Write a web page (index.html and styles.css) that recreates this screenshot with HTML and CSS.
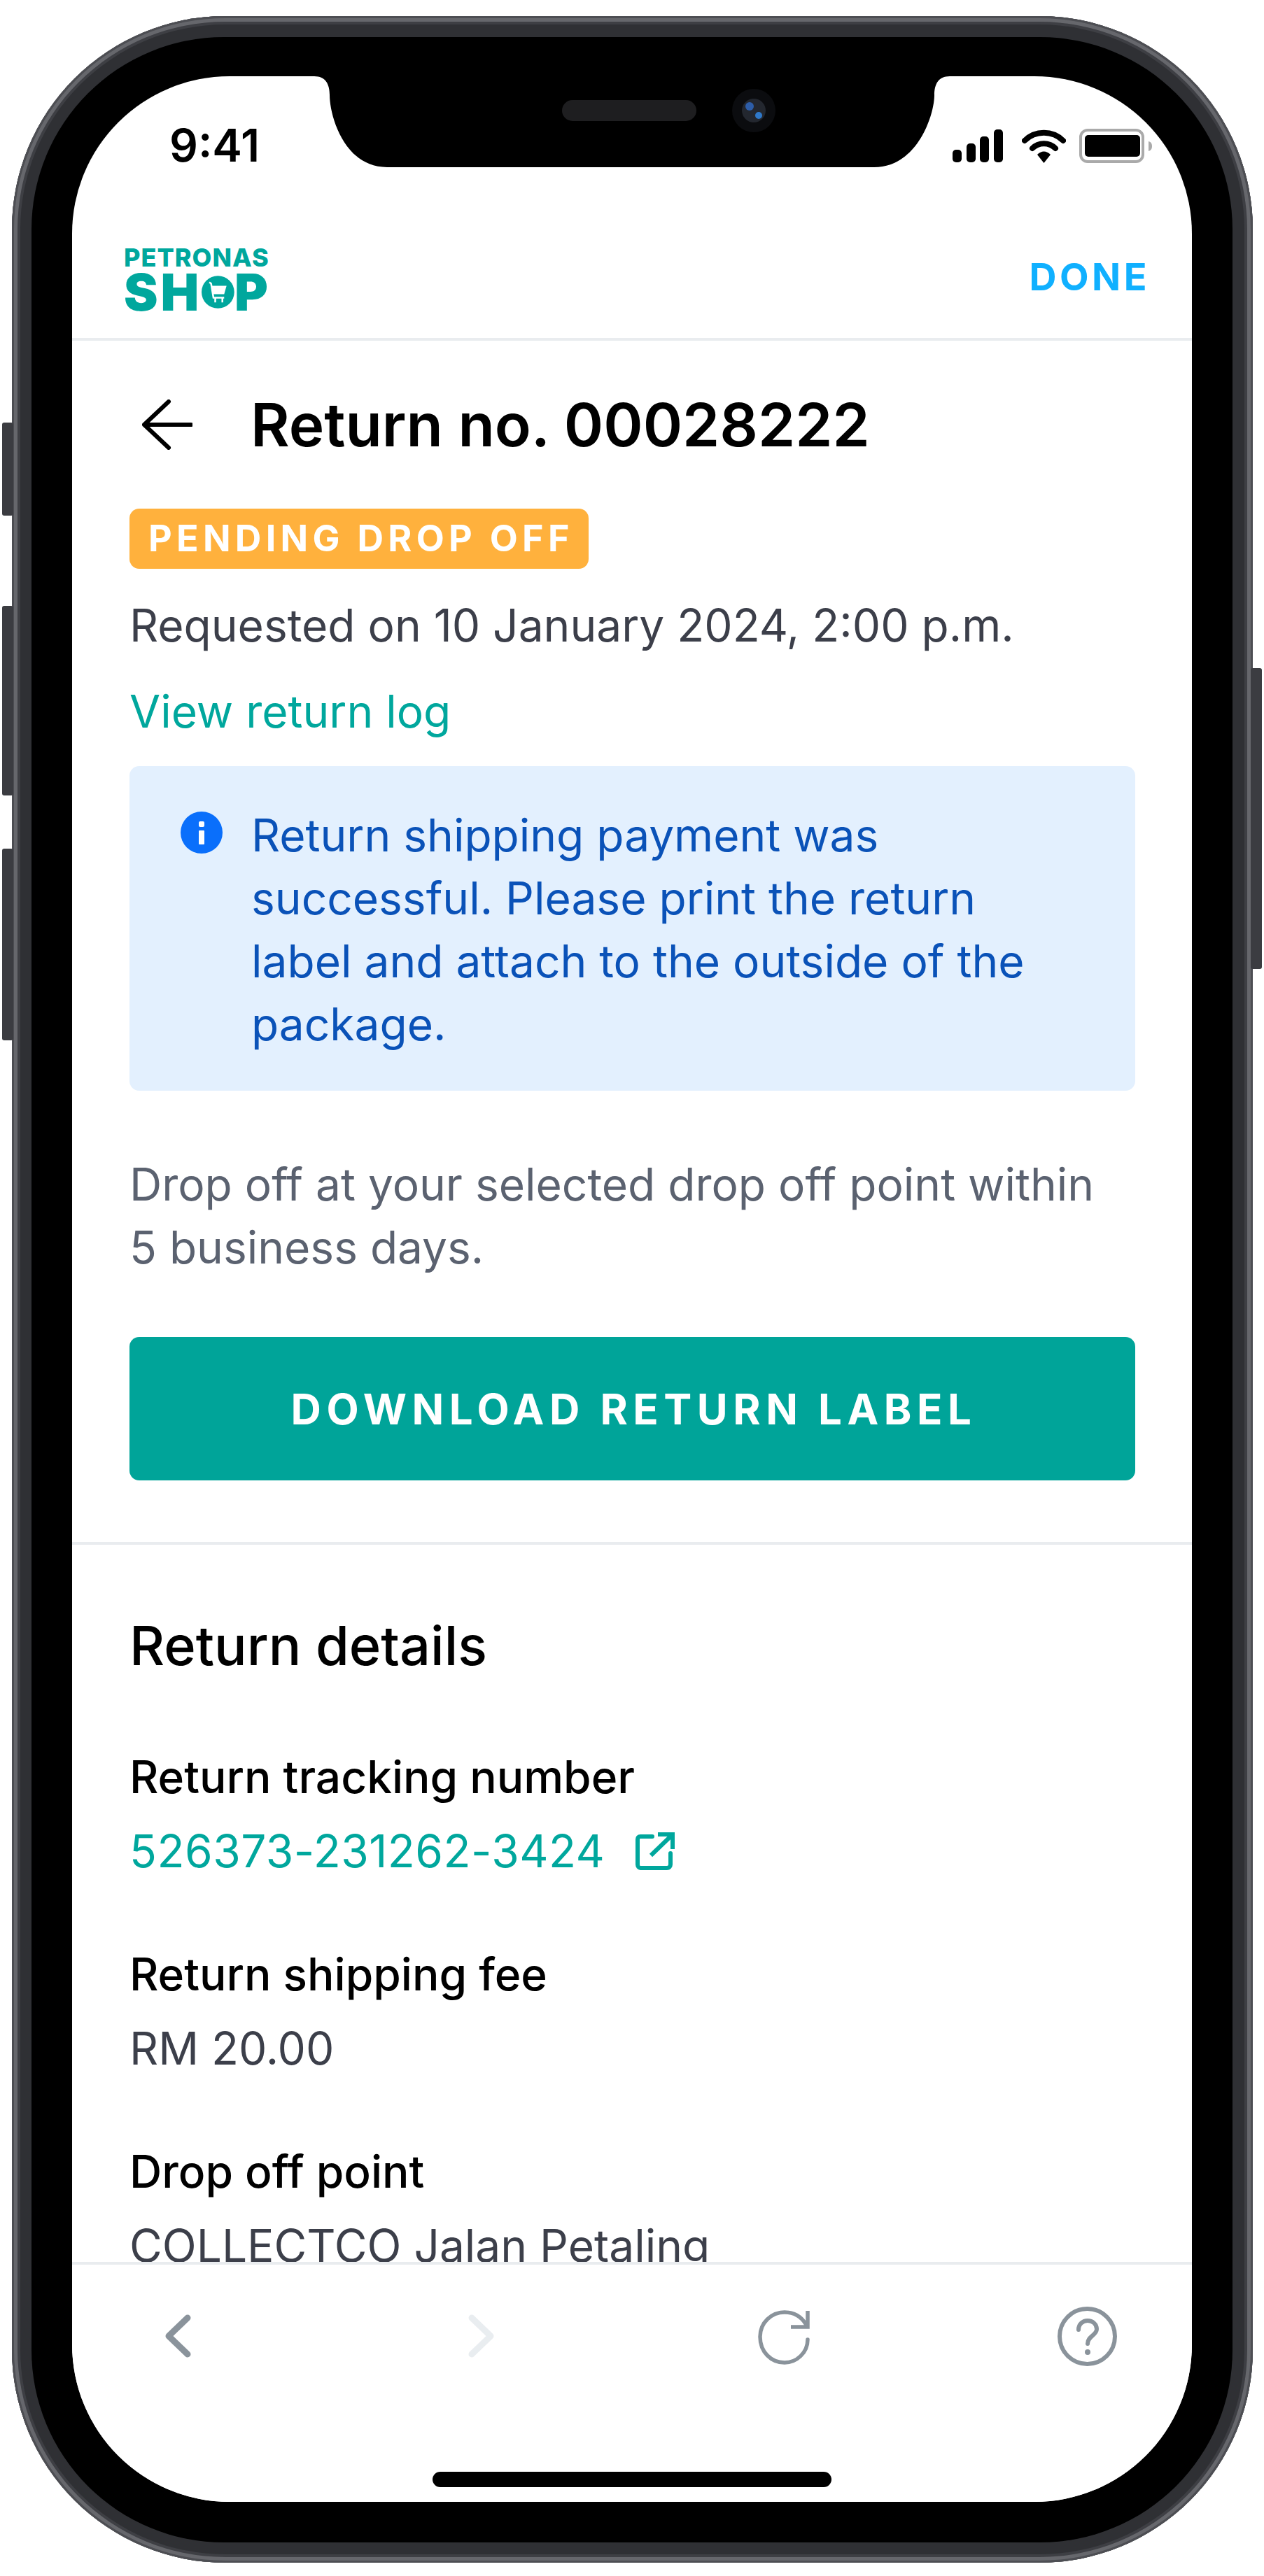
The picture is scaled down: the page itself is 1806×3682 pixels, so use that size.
FILE: index.html
```html
<!DOCTYPE html>
<html>
<head>
    <title>Return no. 00028222</title>
    <link rel="stylesheet" href="styles.css">
</head>
<body>
<div class="phone">
    <span class="side-btn side-mute"></span>
    <span class="side-btn side-up"></span>
    <span class="side-btn side-down"></span>
    <span class="side-btn side-power"></span>
    <div class="bezel">
        <div class="screen">
            <svg class="notch" viewBox="0 0 920 140">
                <path d="M0 0 C16 0 22 11 22 27 C22 55 42 130 104 130 H800 C862 130 886 55 886 27 C886 11 892 0 908 0 Z" fill="#000"/>
                <rect x="354" y="34" width="192" height="30" rx="15" fill="#1e1e20"/>
                <circle cx="628" cy="49" r="31" fill="#0b0c0f"/>
                <circle cx="628" cy="49" r="17" fill="#23272f"/>
                <circle cx="622" cy="43" r="6" fill="#2d5da8"/>
                <circle cx="635" cy="56" r="5" fill="#2f78c8"/>
            </svg>

            <div class="status-bar">
                <span class="clock">9:41</span>
                <div class="status-icons">
                    <svg class="icon-signal" viewBox="0 0 72 47">
                        <rect x="0" y="29" width="13" height="18" rx="5" fill="#000"/>
                        <rect x="20" y="20" width="13" height="27" rx="5" fill="#000"/>
                        <rect x="39" y="10" width="13" height="37" rx="5" fill="#000"/>
                        <rect x="59" y="0" width="13" height="47" rx="5" fill="#000"/>
                    </svg>
                    <svg class="icon-wifi" viewBox="0 0 63 49">
                        <path d="M4 17 C19 2 44 2 59 17" fill="none" stroke="#000" stroke-width="8" stroke-linecap="round"/>
                        <path d="M15 28 C24 19 39 19 48 28" fill="none" stroke="#000" stroke-width="8" stroke-linecap="round"/>
                        <path d="M22 37 C28 31 35 31 41 37 L31.5 49 Z" fill="#000"/>
                    </svg>
                    <svg class="icon-battery" viewBox="0 0 104 49">
                        <rect x="2" y="2" width="89" height="45" rx="10" fill="none" stroke="#aaa" stroke-width="4"/>
                        <rect x="8" y="9" width="79" height="31" rx="5" fill="#000"/>
                        <path d="M99 18 C103 19 104 22 104 25 C104 28 103 31 99 32 Z" fill="#aaa"/>
                    </svg>
                </div>
            </div>

            <div class="app-header">
                <div class="logo">
                    <span class="logo-top">PETRONAS</span>
                    <div class="logo-bottom">
                        <span class="logo-sh">SH</span>
                        <svg class="logo-o" viewBox="0 0 55 55">
                            <circle cx="27.500" cy="27.500" r="27.500" fill="#00a79d"/>
                            <path d="M13 11 L16 13 L20 37 H38" fill="none" stroke="#fff" stroke-width="3"/>
                            <path d="M17 17 H42 L38 31 H19 Z" fill="#fff"/>
                            <path d="M23 37 V45 M35 37 V45" stroke="#fff" stroke-width="3"/>
                        </svg>
                        <span>P</span>
                    </div>
                </div>
                <a class="done">DONE</a>
            </div>

            <div class="content">
                <div class="summary">
                    <div class="title-row">
                        <svg class="icon-back" viewBox="0 0 72 72">
                            <path d="M70 36 H3 M38 3 L3 36 L38 69" fill="none" stroke="#000" stroke-width="6" stroke-linecap="round" stroke-linejoin="round"/>
                        </svg>
                        <h1>Return no. 00028222</h1>
                    </div>
                    <div class="badge">PENDING DROP OFF</div>
                    <p class="requested">Requested on 10 January 2024, 2:00 p.m.</p>
                    <a class="link log-link">View return log</a>
                    <div class="info-box">
                        <svg class="icon-info" viewBox="0 0 60 60">
                            <circle cx="30" cy="30" r="30" fill="#0a6ffb"/>
                            <rect x="26" y="14" width="8" height="8" rx="2" fill="#fff"/>
                            <rect x="26" y="27" width="8" height="20" rx="1" fill="#fff"/>
                        </svg>
                        <p>Return shipping payment was successful. Please print the return label and attach to the outside of the package.</p>
                    </div>
                    <p class="note">Drop off at your selected drop off point within 5 business days.</p>
                    <button class="primary-btn">DOWNLOAD RETURN LABEL</button>
                </div>

                <div class="details">
                    <h2>Return details</h2>
                    <div class="row">
                        <div class="row-label">Return tracking number</div>
                        <div class="row-value tracking">
                            <a class="link">526373-231262-3424</a>
                            <svg class="icon-external" viewBox="0 0 56 54">
                                <path d="M24 6 H7 C4 6 3 8 3 10 V46 C3 49 5 51 7 51 H45 C48 51 50 49 50 46 V30" fill="none" stroke="#00a79d" stroke-width="6" stroke-linecap="round"/>
                                <path d="M22 33 L51 5 M32 3 H53 V24" fill="none" stroke="#00a79d" stroke-width="6"/>
                            </svg>
                        </div>
                    </div>
                    <div class="row">
                        <div class="row-label">Return shipping fee</div>
                        <div class="row-value">RM 20.00</div>
                    </div>
                    <div class="row">
                        <div class="row-label">Drop off point</div>
                        <div class="row-value">COLLECTCO Jalan Petaling</div>
                    </div>
                </div>
            </div>

            <div class="bottom-nav">
                <div class="nav-icons">
                    <svg class="nav-icon" viewBox="0 0 85 85">
                        <path d="M56 16 L29 42 L56 68" fill="none" stroke="#8a939b" stroke-width="9" stroke-linecap="round" stroke-linejoin="round"/>
                    </svg>
                    <svg class="nav-icon" viewBox="0 0 85 85">
                        <path d="M29 16 L56 42 L29 68" fill="none" stroke="#e9edf0" stroke-width="9" stroke-linecap="round" stroke-linejoin="round"/>
                    </svg>
                    <svg class="nav-icon" viewBox="0 0 85 85">
                        <path d="M76 47 C76 66 60 80 43 80 C24 80 8 65 8 43 C8 23 24 8 43 8 C56 8 67 14 74 26" fill="none" stroke="#8a939b" stroke-width="5.500" stroke-linecap="round"/>
                        <path d="M76 6 V29 H52" fill="none" stroke="#8a939b" stroke-width="5.500"/>
                    </svg>
                    <svg class="nav-icon" viewBox="0 0 85 85">
                        <circle cx="42.500" cy="42.500" r="39.500" fill="none" stroke="#8a939b" stroke-width="6"/>
                        <path d="M30 33 C30 25 36 20 43 20 C50 20 56 25 56 32 C56 41 43 42 43 53" fill="none" stroke="#8a939b" stroke-width="6" stroke-linecap="round"/>
                        <circle cx="43" cy="65" r="4" fill="#8a939b"/>
                    </svg>
                </div>
                <div class="home-bar"></div>
            </div>
        </div>
    </div>
</div>
</body>
</html>
```

FILE: styles.css
```css
* {
    box-sizing: border-box;
}

body {
    margin: 0;
    background-color: #fff;
    font-family: Inter, "Liberation Sans", sans-serif;
}

p, h1, h2 {
    margin: 0;
}

.phone {
    position: relative;
    width: 1773px;
    height: 3640px;
    margin: 23px 0 0 17px;
    padding: 30px 29px 29px 28px;
    background-color: #2f3034;
    border-radius: 305px;
    box-shadow: inset 0 0 0 3px #4d4e53, inset 0 0 0 8px #66676c, inset 0 0 0 12px #3e3f44;
}

.side-btn {
    position: absolute;
    width: 16px;
    background-color: #3b3c41;
    border-radius: 3px;
}

.side-mute {
    left: -14px;
    top: 581px;
    height: 133px;
}

.side-up {
    left: -14px;
    top: 843px;
    height: 271px;
}

.side-down {
    left: -14px;
    top: 1190px;
    height: 274px;
}

.side-power {
    right: -13px;
    top: 932px;
    height: 430px;
}

.bezel {
    height: 100%;
    padding: 56px 58px 58px 58px;
    background-color: #000;
    border-radius: 275px;
}

.screen {
    position: relative;
    display: flex;
    flex-direction: column;
    height: 100%;
    background-color: #fff;
    border-radius: 225px;
    overflow: hidden;
}

.notch {
    position: absolute;
    left: 346px;
    top: 0;
    width: 920px;
    height: 140px;
}

.status-bar {
    display: flex;
    justify-content: space-between;
    align-items: center;
    height: 148px;
    padding: 50px 57px 0 139px;
}

.clock {
    font-size: 64px;
    font-weight: 600;
    line-height: 70px;
    color: #000;
}

.status-icons {
    display: flex;
    align-items: center;
    gap: 27px;
}

.icon-signal {
    width: 72px;
    height: 47px;
}

.icon-wifi {
    width: 63px;
    height: 49px;
}

.icon-battery {
    width: 104px;
    height: 49px;
    margin-left: -8px;
}

.app-header {
    display: flex;
    justify-content: space-between;
    align-items: center;
    height: 230px;
    padding: 59px 60px 0 74px;
    border-bottom: 4px solid #e9ecef;
    flex-shrink: 0;
}

.logo {
    display: flex;
    flex-direction: column;
    gap: 8px;
    width: 206px;
    color: #00a79d;
    font-weight: 900;
}

.logo-top {
    font-size: 36px;
    font-weight: 800;
    line-height: 28px;
    letter-spacing: 1px;
    white-space: nowrap;
}

.logo-bottom {
    display: flex;
    align-items: center;
    justify-content: space-between;
    font-size: 73px;
    line-height: 55px;
}

.logo-sh {
    letter-spacing: 4px;
}

.logo-o {
    width: 55px;
    height: 55px;
}

.done {
    margin-bottom: 8px;
    font-size: 54px;
    font-weight: 700;
    letter-spacing: 4.500px;
    color: #10b0ff;
}

.content {
    flex: 1;
    min-height: 0;
    overflow: hidden;
}

.summary {
    padding: 50px 81px 88px 82px;
    border-bottom: 4px solid #e9ecef;
}

.title-row {
    display: flex;
    align-items: center;
    gap: 83px;
    height: 140px;
    padding-left: 18px;
}

.icon-back {
    width: 72px;
    height: 72px;
}

h1 {
    font-size: 85.500px;
    font-weight: 600;
    line-height: 100px;
    color: #000;
}

.badge {
    display: inline-block;
    height: 86px;
    margin-top: 50px;
    padding: 0 21px 0 27px;
    background-color: #ffb13d;
    border-radius: 14px;
    font-size: 52px;
    font-weight: 700;
    line-height: 86px;
    letter-spacing: 6.300px;
    color: #fff;
    vertical-align: top;
}

.requested {
    margin-top: 36px;
    font-size: 64px;
    line-height: 90px;
    color: #3c3f4a;
}

.link {
    color: #00a79d;
}

.log-link {
    display: block;
    margin-top: 33px;
    font-size: 64px;
    line-height: 90px;
}

.info-box {
    display: flex;
    align-items: flex-start;
    gap: 41px;
    margin-top: 33px;
    padding: 54px 73px 50px 73px;
    background-color: #e3f0fe;
    border-radius: 14px;
    font-size: 64px;
    line-height: 90px;
    color: #0a52b8;
}

.icon-info {
    width: 60px;
    height: 60px;
    margin-top: 11px;
    flex-shrink: 0;
}

.note {
    margin-top: 89px;
    padding-right: 40px;
    font-size: 64px;
    line-height: 90px;
    color: #5b6270;
}

.primary-btn {
    display: block;
    width: 100%;
    height: 205px;
    margin-top: 83px;
    padding-left: 10px;
    background-color: #00a499;
    border: 0;
    border-radius: 14px;
    font-family: inherit;
    font-size: 60px;
    font-weight: 700;
    letter-spacing: 7.500px;
    color: #fff;
}

.details {
    padding: 96px 81px 0 82px;
}

h2 {
    height: 96px;
    font-size: 77.500px;
    font-weight: 500;
    line-height: 96px;
    color: #000;
}

.row {
    margin-top: 95px;
    font-size: 64px;
    line-height: 90px;
}

.row + .row {
    margin-top: 86px;
}

.row-label {
    font-weight: 500;
    color: #000;
}

.row-value {
    margin-top: 16px;
    color: #3c3f4a;
    white-space: nowrap;
}

.tracking {
    display: flex;
    align-items: center;
    gap: 44px;
    letter-spacing: 0.500px;
}

.icon-external {
    width: 56px;
    height: 54px;
}

.bottom-nav {
    flex-shrink: 0;
    height: 343px;
    background-color: #fff;
    border-top: 4px solid #e9ecef;
}

.nav-icons {
    display: flex;
    justify-content: space-between;
    padding: 60px 107px 0 109px;
}

.nav-icon {
    width: 85px;
    height: 85px;
}

.home-bar {
    width: 570px;
    height: 22px;
    margin: 151px auto 0;
    background-color: #000;
    border-radius: 11px;
}
```
